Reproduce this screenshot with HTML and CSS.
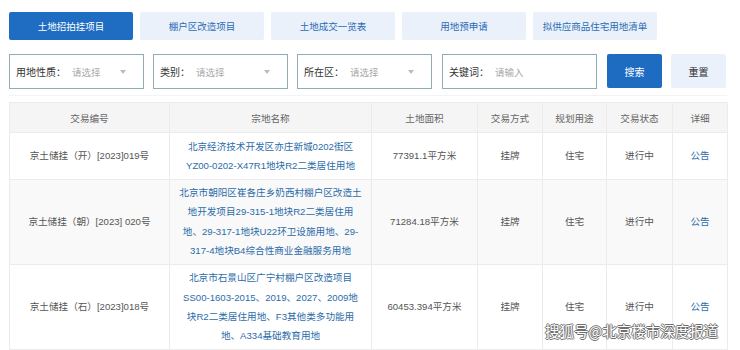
FILE: index.html
```html
<!DOCTYPE html>
<html lang="zh-CN">

<head>
    <meta charset="UTF-8">
    <meta name="viewport" content="width=device-width, initial-scale=1.0">
    <title>土地招拍挂项目</title>
    <link rel="stylesheet" href="styles.css">
</head>

<body>
    <div class="page">
        <div class="tabs">
            <a href="#" class="tab active">土地招拍挂项目</a>
            <a href="#" class="tab">棚户区改造项目</a>
            <a href="#" class="tab">土地成交一览表</a>
            <a href="#" class="tab">用地预申请</a>
            <a href="#" class="tab">拟供应商品住宅用地清单</a>
        </div>

        <div class="filters">
            <div class="field select">
                <span class="label">用地性质：</span>
                <span class="placeholder">请选择</span>
                <span class="arrow"></span>
            </div>
            <div class="field select">
                <span class="label">类别：</span>
                <span class="placeholder">请选择</span>
                <span class="arrow"></span>
            </div>
            <div class="field select">
                <span class="label">所在区：</span>
                <span class="placeholder">请选择</span>
                <span class="arrow"></span>
            </div>
            <div class="field keyword">
                <span class="label">关键词：</span>
                <span class="placeholder">请输入</span>
            </div>
            <button type="button" class="btn search">搜索</button>
            <button type="button" class="btn reset">重置</button>
        </div>

        <table class="list">
            <colgroup>
                <col class="c-no">
                <col class="c-name">
                <col class="c-area">
                <col class="c-way">
                <col class="c-use">
                <col class="c-state">
                <col class="c-more">
            </colgroup>
            <thead>
                <tr>
                    <th>交易编号</th>
                    <th>宗地名称</th>
                    <th>土地面积</th>
                    <th>交易方式</th>
                    <th>规划用途</th>
                    <th>交易状态</th>
                    <th>详细</th>
                </tr>
            </thead>
            <tbody>
                <tr>
                    <td>京土储挂（开）[2023]019号</td>
                    <td class="name"><a href="#">北京经济技术开发区亦庄新城0202街区<br>YZ00-0202-X47R1地块R2二类居住用地</a></td>
                    <td>77391.1平方米</td>
                    <td>挂牌</td>
                    <td>住宅</td>
                    <td>进行中</td>
                    <td><a href="#">公告</a></td>
                </tr>
                <tr class="alt">
                    <td>京土储挂（朝）[2023] 020号</td>
                    <td class="name"><a href="#">北京市朝阳区崔各庄乡奶西村棚户区改造土<br>地开发项目29-315-1地块R2二类居住用<br>地、29-317-1地块U22环卫设施用地、29-<br>317-4地块B4综合性商业金融服务用地</a></td>
                    <td>71284.18平方米</td>
                    <td>挂牌</td>
                    <td>住宅</td>
                    <td>进行中</td>
                    <td><a href="#">公告</a></td>
                </tr>
                <tr>
                    <td>京土储挂（石）[2023]018号</td>
                    <td class="name"><a href="#">北京市石景山区广宁村棚户区改造项目<br>SS00-1603-2015、2019、2027、2009地<br>块R2二类居住用地、F3其他类多功能用<br>地、A334基础教育用地</a></td>
                    <td>60453.394平方米</td>
                    <td>挂牌</td>
                    <td>住宅</td>
                    <td>进行中</td>
                    <td><a href="#">公告</a></td>
                </tr>
            </tbody>
        </table>
    </div>
    <div class="watermark">搜狐号@北京楼市深度报道</div>
</body>

</html>
```

FILE: styles.css
```css
body {
    margin: 0;
    background: #ffffff;
    font-family: "Noto Sans CJK SC", "Noto Sans", sans-serif;
    color: #555555;
    overflow: hidden;
}

.page {
    padding: 12px 13px 0 9px;
}

.tabs {
    display: flex;
    gap: 7px;
}

.tab {
    width: 124px;
    height: 28px;
    line-height: 28px;
    text-align: center;
    font-size: 9.5px;
    text-decoration: none;
    color: #2a6cb3;
    background: #eaf1fb;
    border-radius: 2px;
}

.tab.active {
    color: #ffffff;
    background: #1f6dc3;
}

.filters {
    display: flex;
    gap: 9px;
    margin-top: 14px;
    padding-bottom: 6px;
    border-bottom: 1px solid #f1f3f5;
}

.field {
    box-sizing: border-box;
    height: 35px;
    border: 1px solid #8fadb3;
    display: flex;
    align-items: center;
    padding: 0 6px;
    font-size: 10px;
}

.select {
    width: 135px;
}

.keyword {
    width: 155px;
    margin-left: 1px;
}

.label {
    color: #333333;
}

.placeholder {
    color: #aaaaaa;
    margin-left: 6px;
    font-size: 9.5px;
}

.arrow {
    margin-left: auto;
    margin-right: 11px;
    width: 0;
    height: 0;
    border-left: 3.5px solid transparent;
    border-right: 3.5px solid transparent;
    border-top: 4px solid #b9bdc2;
}

.btn {
    width: 55px;
    height: 34px;
    border: none;
    border-radius: 2px;
    font-family: inherit;
    font-size: 10px;
    cursor: pointer;
}

.search {
    margin-left: 1px;
    background: #1e6cc2;
    color: #ffffff;
}

.reset {
    background: #eaf1fb;
    color: #333333;
}

.list {
    width: 718px;
    margin-top: 6px;
    border-collapse: collapse;
    table-layout: fixed;
    font-family: "Liberation Sans", "Noto Sans CJK SC", sans-serif;
    font-size: 9.6px;
}

.c-no { width: 160px; }
.c-name { width: 202px; }
.c-area { width: 106px; }
.c-way { width: 65px; }
.c-use { width: 64px; }
.c-state { width: 66px; }
.c-more { width: 55px; }

th,
td {
    border: 1px solid #ebebeb;
    text-align: center;
    vertical-align: middle;
    white-space: nowrap;
}

th {
    height: 29px;
    padding: 0;
    background: #f5f5f5;
    color: #666666;
    font-weight: normal;
}

td {
    padding: 3.5px 0;
    line-height: 19.3px;
}

.alt td {
    background: #f9f9f9;
}

td a {
    color: #2b6ca9;
    text-decoration: none;
}

.watermark {
    position: absolute;
    left: 545px;
    top: 320px;
    font-size: 14.5px;
    color: #ffffff;
    text-shadow: 1px 0 0 #707070, -1px 0 0 #707070, 0 1px 0 #707070, 0 -1px 0 #707070;
}
```
